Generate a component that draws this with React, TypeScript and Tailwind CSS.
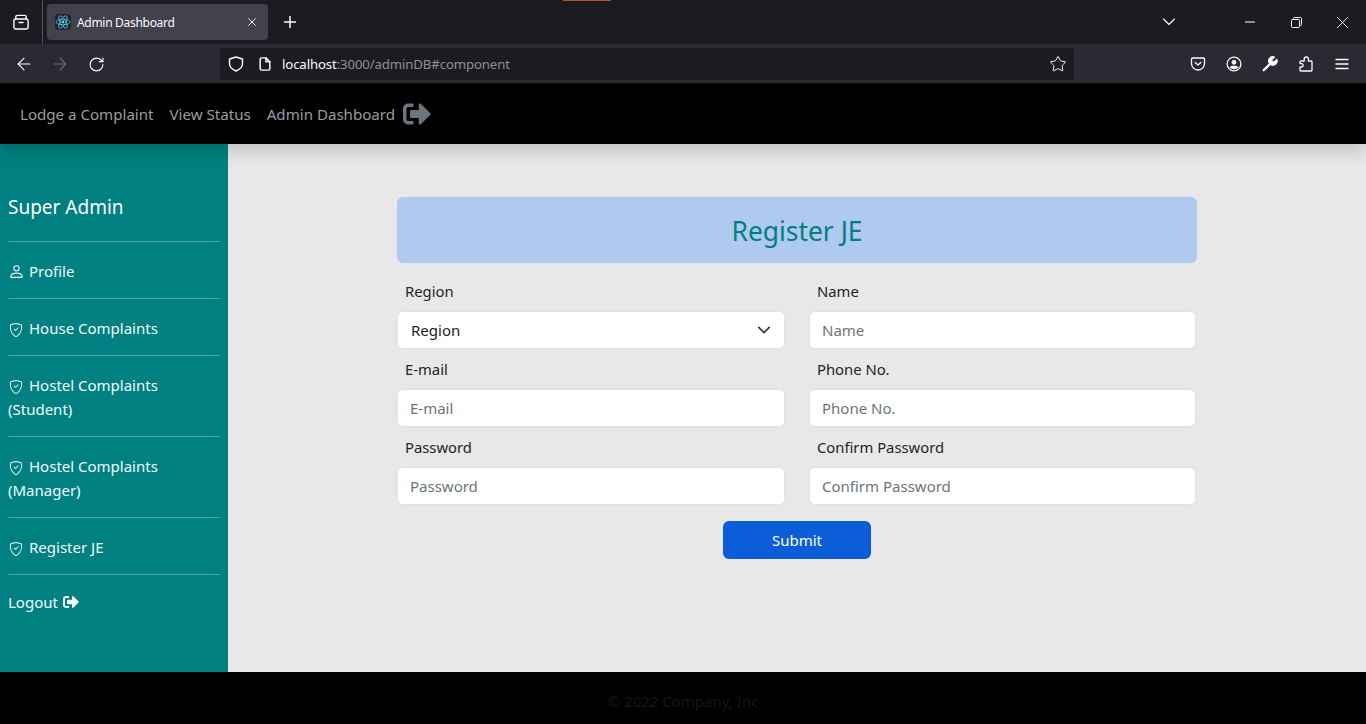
import React from "react";
import { ArrowLeft, ArrowRight, RotateCw, Star } from "lucide-react";
import { BsPerson, BsShieldCheck } from "react-icons/bs";
import { FaSignOutAlt } from "react-icons/fa";

const font = { fontFamily: '"Noto Sans", "Open Sans", sans-serif' };

function Glyph({ size, box = 16, sw = 1.3, className, children }: { size: number; box?: number; sw?: number; className?: string; children: React.ReactNode }) {
  return (
    <svg viewBox={`0 0 ${box} ${box}`} width={size} height={size} className={className} fill="none" stroke="currentColor" strokeWidth={sw} strokeLinecap="round" strokeLinejoin="round">
      {children}
    </svg>
  );
}

function ReactLogo() {
  return (
    <svg viewBox="0 0 16 16" className="w-4 h-4 rounded-sm bg-[#20232a]" fill="none" stroke="#61dafb" strokeWidth="0.7">
      <circle cx="8" cy="8" r="1.4" fill="#61dafb" stroke="none" />
      <ellipse cx="8" cy="8" rx="7" ry="2.8" />
      <ellipse cx="8" cy="8" rx="7" ry="2.8" transform="rotate(60 8 8)" />
      <ellipse cx="8" cy="8" rx="7" ry="2.8" transform="rotate(120 8 8)" />
    </svg>
  );
}

function BrowserChrome() {
  return (
    <div className="text-[#fbfbfe]">
      <div className="h-[44px] bg-[#1c1b22] flex items-center relative">
        <div className="absolute left-[563px] top-0 w-[48px] h-[1px] bg-[#b5561c]" />
        <div className="w-[43px] h-full flex items-center justify-center border-r border-[#52525e]">
          <Glyph size={16} sw={1.4}>
            <rect x="0.9" y="5" width="14.2" height="10" rx="2" />
            <path d="M2.8 5V3a1.6 1.6 0 0 1 1.6-1.6h7.2A1.6 1.6 0 0 1 13.2 3v2" />
            <path d="M6 8.5h4" />
          </Glyph>
        </div>
        <div className="ml-[4px] w-[221px] h-[36px] bg-[#42414d] rounded-[4px] flex items-center pl-[8px] pr-[12px]">
          <ReactLogo />
          <span className="ml-[6px] pt-[2px] text-[12px] flex-1 tracking-[-0.3px]" style={font}>Admin Dashboard</span>
          <Glyph size={8} box={8} sw={0.9}>
            <path d="M0.5 0.5l7 7M7.5 0.5l-7 7" />
          </Glyph>
        </div>
        <Glyph size={12} box={12} sw={1.5} className="ml-[16px]">
          <path d="M6 0.5v11M0.5 6h11" />
        </Glyph>
        <div className="flex-1" />
        <Glyph size={12} box={12} sw={1.1} className="mr-[70px]">
          <path d="M0.5 3l5.5 5.5L11.5 3" />
        </Glyph>
        <Glyph size={10} box={10} sw={1.2} className="mr-[36px]">
          <path d="M0 5h10" />
        </Glyph>
        <Glyph size={11} box={11} sw={1} className="mr-[35px]">
          <rect x="0.5" y="2.5" width="8" height="8" rx="1" />
          <path d="M2.5 2.5V1.5a1 1 0 0 1 1-1h6a1 1 0 0 1 1 1v6a1 1 0 0 1-1 1H8.5" />
        </Glyph>
        <Glyph size={11} box={11} sw={0.9} className="mr-[18px]">
          <path d="M0.3 0.3l10.4 10.4M10.7 0.3L0.3 10.7" />
        </Glyph>
      </div>
      <div className="h-[40px] bg-[#2b2a33] flex items-center pt-[1px] border-b border-[#0c0c0d]">
        <ArrowLeft className="ml-[14px] w-[20px] h-[20px]" strokeWidth={1.3} />
        <ArrowRight className="ml-[16px] w-[20px] h-[20px] text-[#6f6e75]" strokeWidth={1.3} />
        <RotateCw className="ml-[18px] w-[17px] h-[17px]" strokeWidth={1.6} />
        <div className="ml-[115px] w-[854px] h-[32px] bg-[#1c1b22] rounded-[4px] flex items-center pl-[8px] pr-[7px]">
          <Glyph size={16} sw={1.4}>
            <path d="M8 1 14.5 3v4.5c0 3.5-2.8 6-6.5 7.5-3.700-1.500-6.500-4-6.500-7.500V3Z" />
          </Glyph>
          <Glyph size={14} sw={1.7} className="ml-[14px]">
            <path d="M2.5 2.5A1.5 1.5 0 0 1 4 1h5l4.5 4.500v8A1.5 1.5 0 0 1 12 15H4a1.500 1.500 0 0 1-1.500-1.500Z" />
            <path d="M9 1v4.5h4.5" />
          </Glyph>
          <span className="ml-[10px] pt-[2px] text-[13.2px] flex-1 tracking-[-0.12px] text-[#8f8f96]" style={font}>
            <span className="text-[#fbfbfe]">localhost</span>:3000/adminDB#component
          </span>
          <Star className="w-[18px] h-[18px]" strokeWidth={1.3} />
        </div>
        <div className="flex-1" />
        <div className="flex items-center gap-[20px] pr-[16px]">
          <Glyph size={16} sw={1.3}>
            <path d="M2.5 2h11c.6 0 1 .4 1 1v4.5c0 3.6-2.9 6.500-6.500 6.500s-6.500-2.900-6.500-6.500V3c0-.6.4-1 1-1Z" />
            <path d="m5.2 6.5 2.8 2.600 2.800-2.600" />
          </Glyph>
          <Glyph size={16} sw={1.3}>
            <circle cx="8" cy="8" r="6.9" />
            <circle cx="8" cy="6.3" r="2.4" fill="currentColor" stroke="none" />
            <path d="M3.5 11.3c1-1.200 2.600-1.600 4.500-1.600s3.500.4 4.500 1.600c-1 1.300-2.600 2-4.500 2s-3.500-.7-4.500-2Z" fill="currentColor" stroke="none" />
          </Glyph>
          <Glyph size={16} sw={1.2}>
            <path d="M1.8 14.200 8 8" strokeWidth="2.4" />
            <path d="M6.8 6.400A4.300 4.300 0 0 1 12.500 1l-2.700 2.600.4 1.900 1.900.5L14.800 3.300A4.300 4.300 0 0 1 9.500 9Z" fill="currentColor" />
          </Glyph>
          <Glyph size={16} sw={1.3}>
            <path d="M8.3 1c1.300 0 2.100.9 2.100 2v2h2.600a1 1 0 0 1 1 1v8a1 1 0 0 1-1 1H3a1 1 0 0 1-1-1v-3h1.500a1.700 1.700 0 0 0 0-3.400H2V6a1 1 0 0 1 1-1h3.200V3c0-1.100.8-2 2.100-2Z" />
          </Glyph>
          <Glyph size={16} sw={1.3}>
            <path d="M2 3.5h12M2 8h12M2 12.5h12" />
          </Glyph>
        </div>
      </div>
    </div>
  );
}

function SideItem({ icon, children }: { icon: React.ReactNode; children: React.ReactNode }) {
  return (
    <div className="border-b border-[#4da6a6] pt-[17px] pb-[15px] leading-[24px] text-[15px]">
      <span className="inline-flex items-center justify-center w-[14px] h-[15px] ml-[1px] mr-[6px] align-[-3px]">{icon}</span>
      {children}
    </div>
  );
}

function Field({ label, placeholder }: { label: string; placeholder: string }) {
  return (
    <div>
      <div className="h-[32px] pl-[8px] pt-[2px] leading-[24px] text-[14.8px] text-[#212529]">{label}</div>
      <div className="mt-[2px] h-[38px] bg-white border border-[#dee2e6] rounded-[6px] px-[12px] flex items-center text-[15px] text-[#6c757d]">
        {placeholder}
      </div>
    </div>
  );
}

export default function App() {
  const shield = <BsShieldCheck className="w-[14px] h-[14px] shrink-0" />;
  return (
    <div className="w-[1366px] h-[724px] overflow-hidden flex flex-col bg-black" style={font}>
      <BrowserChrome />
      <nav className="h-[60px] shrink-0 bg-black flex items-center pl-[20px] gap-[16px] text-[15.1px] text-[#9a9da1] relative z-10 shadow-[0_8px_16px_rgba(0,0,0,0.15)]">
        <span>Lodge a Complaint</span>
        <span>View Status</span>
        <span className="flex items-center gap-[8px]">
          Admin Dashboard
          <FaSignOutAlt className="w-[28px] h-[28px] text-[#6c757d]" />
        </span>
      </nav>
      <div className="flex h-[528px] shrink-0">
        <aside className="w-[228px] bg-[#008080] text-[#f1fbfb] px-[8px] pt-[47px]">
          <div className="text-[19px] leading-[32px] pb-[18px] border-b border-[#4da6a6] text-white">Super Admin</div>
          <SideItem icon={<BsPerson className="w-[17px] h-[17px] shrink-0" />}>Profile</SideItem>
          <SideItem icon={shield}>House Complaints</SideItem>
          <SideItem icon={shield}>Hostel Complaints (Student)</SideItem>
          <SideItem icon={shield}>Hostel Complaints (Manager)</SideItem>
          <SideItem icon={shield}>Register JE</SideItem>
          <div className="pt-[15px] leading-[24px] text-[15px] flex items-center gap-[5px]">
            Logout <FaSignOutAlt className="w-[16px] h-[16px]" />
          </div>
        </aside>
        <main className="flex-1 bg-[#e8e8e8] pl-[169px] pt-[53px]">
          <div className="w-[800px]">
            <div className="h-[66px] pt-[4px] bg-[#b0c9ee] rounded-[6px] flex items-center justify-center text-[#008080] text-[26.4px]">
              Register JE
            </div>
            <div className="grid grid-cols-[388px_387px] gap-x-[24px] gap-y-[6px] mt-[14px]">
              <div>
                <div className="h-[32px] pl-[8px] pt-[2px] leading-[24px] text-[14.8px] text-[#212529]">Region</div>
                <div className="mt-[2px] h-[38px] bg-white border border-[#dee2e6] rounded-[6px] pl-[13px] pr-[13px] flex items-center justify-between text-[15px] text-[#212529]">
                  Region
                  <Glyph size={14} sw={1.9} className="text-[#343a40]">
                    <path d="m2 5 6 6 6-6" />
                  </Glyph>
                </div>
              </div>
              <Field label="Name" placeholder="Name" />
              <Field label="E-mail" placeholder="E-mail" />
              <Field label="Phone No." placeholder="Phone No." />
              <Field label="Password" placeholder="Password" />
              <Field label="Confirm Password" placeholder="Confirm Password" />
            </div>
            <div className="flex justify-center mt-[16px]">
              <div className="w-[148px] h-[38px] bg-[#0b5ed7] rounded-[6px] text-white text-[15px] flex items-center justify-center">
                Submit
              </div>
            </div>
          </div>
        </main>
      </div>
      <footer className="h-[52px] shrink-0 bg-black flex items-center justify-center text-[15px] text-[#151515] pt-[7px]">
        © 2022 Company, Inc
      </footer>
    </div>
  );
}
